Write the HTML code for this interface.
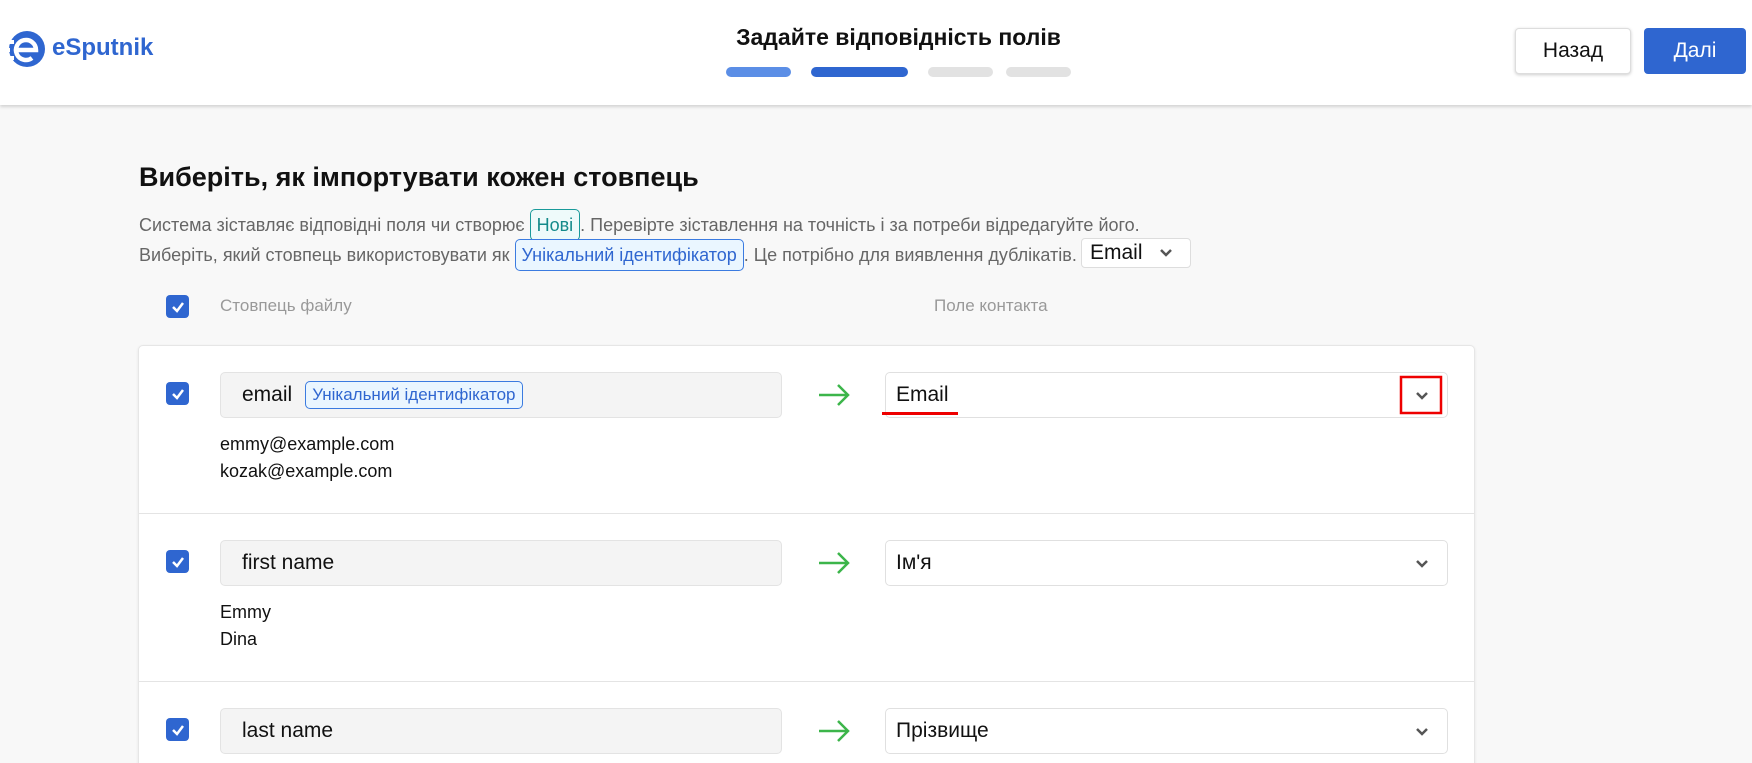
<!DOCTYPE html>
<html><head><meta charset="utf-8"><style>
*{box-sizing:border-box;margin:0;padding:0}
html,body{width:1752px;height:763px;overflow:hidden}
body{background:#f8f8f8;font-family:"Liberation Sans",sans-serif;position:relative;color:#111}
.abs{position:absolute}
.hdr{left:0;top:0;width:1752px;height:105px;background:#fff;box-shadow:0 2px 3px rgba(0,0,0,.15)}
.bar{height:10px;top:67px;border-radius:5px}
.btn{top:28px;height:46px;border-radius:4px;font-size:21px;display:flex;align-items:center;justify-content:center}
.cb{width:23px;height:23px;background:#2f66d0;border-radius:4px;display:flex;align-items:center;justify-content:center}
.tag{border:1px solid #3b7be0;background:#eaf6ff;color:#2f66d0;border-radius:5px;padding:0 6px;display:inline-block}
.inp{left:220px;width:562px;height:46px;background:#f4f4f4;border:1px solid #e3e3e3;border-radius:5px;font-size:21px;padding-left:21px;display:flex;align-items:center}
.sel{left:885px;width:563px;height:46px;background:#fff;border:1px solid #e0e0e0;border-radius:5px;font-size:21px;padding-left:10px;display:flex;align-items:center}
.smp{left:220px;font-size:18px;line-height:27px}
</style></head><body>
<div class="abs hdr"></div>
<svg class="abs" style="left:0;top:29px" width="48" height="40" viewBox="0 0 48 40">
<circle cx="27" cy="20" r="18" fill="#2f66d0"/>
<path d="M17 21 H36 A10 10 0 1 0 32 29" stroke="#fff" stroke-width="4.5" fill="none"/>
<path d="M3 13 L14 13 M0 21 L10 21 M5 29 L14 29" stroke="#fff" stroke-width="4"/>
</svg>
<div class="abs" style="left:52px;top:34px;font-size:24px;font-weight:bold;color:#2f66d0">eSputnik</div>
<div class="abs" style="left:0;width:1797px;text-align:center;top:24px;font-size:23px;font-weight:bold">Задайте відповідність полів</div>
<div class="abs bar" style="left:726px;width:65px;background:#5b8ee6"></div>
<div class="abs bar" style="left:811px;width:97px;background:#2f66d0"></div>
<div class="abs bar" style="left:928px;width:65px;background:#e2e2e2"></div>
<div class="abs bar" style="left:1006px;width:65px;background:#e2e2e2"></div>
<div class="abs btn" style="left:1515px;width:116px;background:#fff;border:1px solid #ddd;box-shadow:0 1px 3px rgba(0,0,0,.2)">Назад</div>
<div class="abs btn" style="left:1644px;width:102px;background:#2f66d0;color:#fff">Далі</div>

<div class="abs" style="left:139px;top:162px;font-size:27px;font-weight:bold">Виберіть, як імпортувати кожен стовпець</div>
<div class="abs" style="left:139px;top:209px;font-size:18px;color:#666;line-height:30px;white-space:nowrap">Система зіставляє відповідні поля чи створює <span class="tag" style="border-color:#1a9a9a;color:#148a8a;background:#eefafa">Нові</span>. Перевірте зіставлення на точність і за потреби відредагуйте його.</div>
<div class="abs" style="left:139px;top:239px;font-size:18px;color:#666;line-height:30px;white-space:nowrap">Виберіть, який стовпець використовувати як <span class="tag">Унікальний ідентифікатор</span>. Це потрібно для виявлення дублікатів.</div>
<div class="abs" style="left:1081px;top:238px;width:110px;height:30px;background:#fff;border:1px solid #ddd;border-radius:4px;font-size:21px;padding-left:8px;line-height:28px">Email<svg style="position:absolute;left:77px;top:9px" width="14" height="10"><path d="M2 2 L7 7 L12 2" stroke="#555" stroke-width="2.5" fill="none"/></svg></div>

<div class="abs cb" style="left:166px;top:295px"><svg width="14" height="12"><path d="M2 6 L6 10 L12 2" stroke="#fff" stroke-width="2.5" fill="none"/></svg></div>
<div class="abs" style="left:220px;top:296px;font-size:17px;color:#999">Стовпець файлу</div>
<div class="abs" style="left:934px;top:296px;font-size:17px;color:#999">Поле контакта</div>

<div class="abs" style="left:138px;top:345px;width:1337px;height:600px;background:#fff;border:1px solid #e6e6e6;border-radius:5px;box-shadow:0 1px 3px rgba(0,0,0,.08)"></div>
<div class="abs" style="left:139px;top:513px;width:1335px;height:1px;background:#e4e4e4"></div>
<div class="abs" style="left:139px;top:681px;width:1335px;height:1px;background:#e4e4e4"></div>

<div class="abs cb" style="left:166px;top:382px"><svg width="14" height="12"><path d="M2 6 L6 10 L12 2" stroke="#fff" stroke-width="2.5" fill="none"/></svg></div>
<div class="abs inp" style="top:372px">email<span class="tag" style="font-size:17px;margin-left:13px;line-height:26px">Унікальний ідентифікатор</span></div>
<div class="abs smp" style="top:431px">emmy@example.com<br>kozak@example.com</div>
<div class="abs sel" style="top:372px">Email</div>

<div class="abs cb" style="left:166px;top:550px"><svg width="14" height="12"><path d="M2 6 L6 10 L12 2" stroke="#fff" stroke-width="2.5" fill="none"/></svg></div>
<div class="abs inp" style="top:540px">first name</div>
<div class="abs smp" style="top:599px">Emmy<br>Dina</div>
<div class="abs sel" style="top:540px">Ім'я</div>

<div class="abs cb" style="left:166px;top:718px"><svg width="14" height="12"><path d="M2 6 L6 10 L12 2" stroke="#fff" stroke-width="2.5" fill="none"/></svg></div>
<div class="abs inp" style="top:708px">last name</div>
<div class="abs sel" style="top:708px">Прізвище</div>

<svg class="abs" style="left:0;top:0" width="1752" height="763">
<g stroke="#3cb54a" stroke-width="2.5" fill="none">
<path d="M819 395 H848 M838 385 L848 395 L838 405"/>
<path d="M819 563 H848 M838 553 L848 563 L838 573"/>
<path d="M819 731 H848 M838 721 L848 731 L838 741"/>
</g>
<g stroke="#555" stroke-width="2.5" fill="none">
<path d="M1417 393 L1422 398 L1427 393"/>
<path d="M1417 561 L1422 566 L1427 561"/>
<path d="M1417 729 L1422 734 L1427 729"/>
</g>
<rect x="1401" y="377" width="40" height="36" fill="none" stroke="#e00" stroke-width="2.5"/>
<rect x="882" y="412" width="76" height="3" fill="#e00"/>
</svg>
</body></html>
